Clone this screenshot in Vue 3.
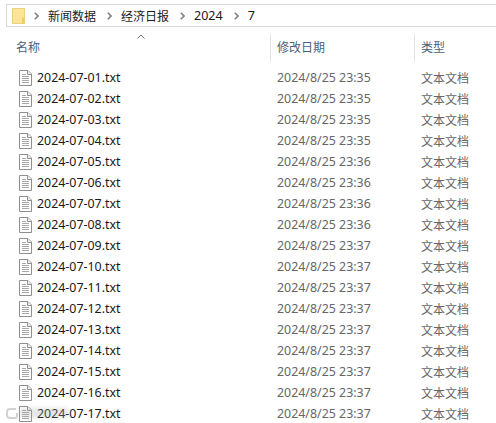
<template>
  <div class="explorer">
    <div class="crumbs">
      <svg class="folder" width="13" height="16" viewBox="0 0 13 16">
        <path d="M0.500 0.500h12v15h-12z" fill="#fce39a" stroke="#ecd07a" />
        <path d="M10 9.500h2.500v6h-2.500z" fill="#f3cd5c" />
      </svg>
      <template v-for="part in crumbs" :key="part">
        <svg class="chev" width="5" height="8" viewBox="0 0 5 8">
          <path d="M0.800 0.800l3.200 3.200-3.200 3.200" fill="none" stroke="#808080" stroke-width="1.600" />
        </svg>
        <span class="crumb" :class="{ num: /\d/.test(part) }">{{ part }}</span>
      </template>
    </div>

    <div class="head">
      <svg class="sort" width="8" height="5" viewBox="0 0 8 5">
        <path d="M0.500 4.500l3.500-3.500 3.500 3.500" fill="none" stroke="#707070" />
      </svg>
      <div class="col col-name">名称</div>
      <div class="col col-date">修改日期</div>
      <div class="col col-type">类型</div>
    </div>

    <ul class="files">
      <li v-for="f in files" :key="f.name" class="row">
        <div class="cell-name">
          <svg class="doc" width="13" height="16" viewBox="0 0 13 16">
            <path d="M0.500 0.500h8.500l3.500 3.500v11.500h-12z" fill="#fff" stroke="#8f8f8f" />
            <path d="M8.500 0.500v4h4" fill="#eee" stroke="#8f8f8f" />
            <path d="M3 4.500h4M3 6.500h7M3 8.500h7M3 10.500h7M3 12.500h7" stroke="#a8a8a8" />
          </svg>
          <span>{{ f.name }}</span>
        </div>
        <div class="cell-date">{{ f.date }}</div>
        <div class="cell-type">文本文档</div>
      </li>
    </ul>

    <div class="mark">
      <svg width="12" height="12" viewBox="0 0 12 12">
        <path d="M10 2H4a3 3 0 0 0-3 3v3a3 3 0 0 0 3 3h5a2 2 0 0 0 2-2V6" fill="none" stroke="#c4c4c4" stroke-width="2" />
      </svg>
      <div class="mark-blur"></div>
    </div>
  </div>
</template>

<script setup>
const crumbs = ['新闻数据', '经济日报', '2024', '7']

const files = Array.from({ length: 17 }, (_, i) => {
  const day = i + 1
  let time = '23:37'
  if (day <= 4) time = '23:35'
  else if (day <= 8) time = '23:36'
  return {
    name: `2024-07-${String(day).padStart(2, '0')}.txt`,
    date: `2024/8/25 ${time}`,
  }
})
</script>

<style>
html,
body {
  margin: 0;
  background: #fff;
}
</style>

<style scoped>
.explorer {
  position: relative;
  width: 496px;
  height: 423px;
  overflow: hidden;
  background: #fff;
  font-family: "Noto Sans", "Noto Sans CJK SC", sans-serif;
  font-size: 12px;
}

.crumbs {
  display: flex;
  align-items: center;
  height: 21px;
  margin: 4px 0 0 6px;
  padding-left: 5px;
  border: 1px solid #d9d9d9;
  border-right: 0;
  color: #1a1a1a;
}

.folder {
  margin-right: 9px;
}

.chev {
  margin-right: 9px;
}

.crumb {
  margin-right: 11px;
}

.crumb.num {
  font-size: 12.5px;
}

.head {
  position: relative;
  display: flex;
  height: 28px;
  margin-top: 7px;
  color: #4c607a;
}

.sort {
  position: absolute;
  left: 137px;
  top: 0;
}

.col {
  line-height: 28px;
}

.col-name {
  width: 270px;
  padding-left: 16px;
  box-sizing: border-box;
}

.col-date {
  width: 144px;
  padding-left: 6px;
  box-sizing: border-box;
  border-left: 1px solid #e5e5e5;
}

.col-type {
  flex: 1;
  padding-left: 6px;
  border-left: 1px solid #e5e5e5;
}

.files {
  list-style: none;
  margin: 5px 0 0;
  padding: 0;
}

.row {
  display: flex;
  align-items: center;
  height: 21px;
  color: #666;
}

.cell-name {
  display: flex;
  align-items: center;
  gap: 5px;
  width: 277px;
  padding-left: 19px;
  box-sizing: border-box;
  color: #1a1a1a;
  font-size: 12.4px;
}

.cell-date {
  width: 144px;
  font-size: 12.4px;
}

/* watermark over the last row */
.mark {
  position: absolute;
  left: 6px;
  top: 407px;
  display: flex;
  align-items: center;
  gap: 2px;
  opacity: 0.75;
  filter: blur(0.7px);
}

.mark-blur {
  width: 48px;
  height: 10px;
  background: rgba(170, 170, 170, 0.4);
  filter: blur(2px);
}
</style>
